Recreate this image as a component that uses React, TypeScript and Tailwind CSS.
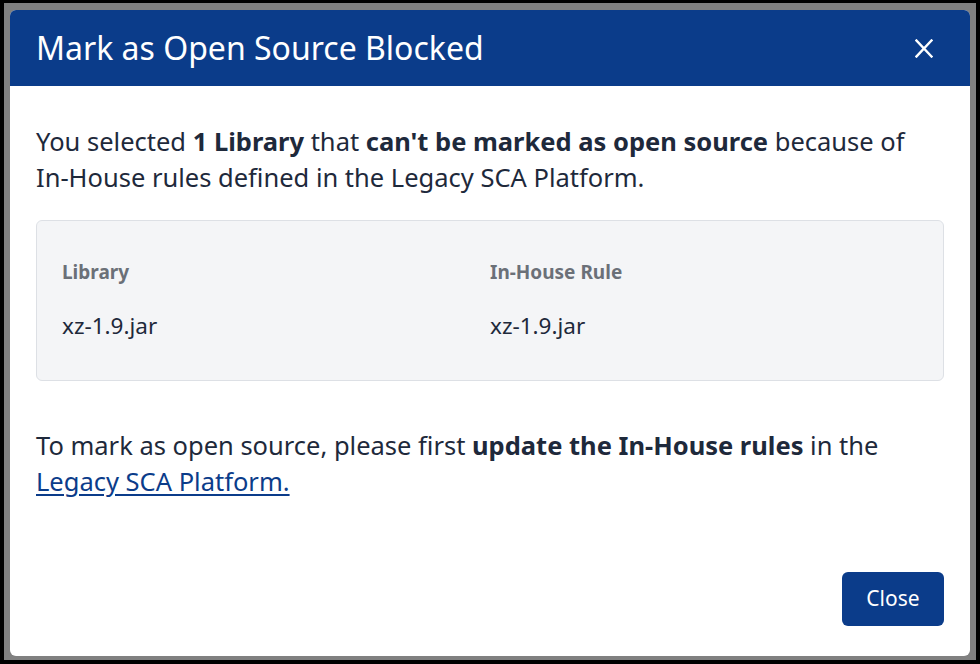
import React from "react";

export default function App() {
  return (
    <div className="w-[980px] h-[664px] bg-black pt-[3px] pl-[4px] pr-[4px] pb-[4px]" style={{ fontFamily: '"Noto Sans", "Open Sans", sans-serif' }}>
      <div className="w-full h-full bg-[#808080] pt-[7px] pl-[6px] pr-[6px] pb-[4px]">
        <div className="w-full h-full bg-white rounded-[6px] overflow-hidden flex flex-col">
          <div className="h-[76px] bg-[#0b3c8a] flex items-center justify-between pl-[26px] pr-[37px] shrink-0">
            <h1 className="text-white text-[32px] leading-none font-normal">Mark as Open Source Blocked</h1>
            <svg width="18" height="19" viewBox="0 0 18 19" className="text-white">
              <path d="M1.5 1.5 L16.5 17.5 M16.5 1.5 L1.5 17.5" stroke="currentColor" strokeWidth="2.4" strokeLinecap="square" fill="none" />
            </svg>
          </div>
          <div className="flex-1 flex flex-col px-[26px] pt-[37px] pb-[30px] text-[#1e293b]">
            <p className="text-[25.5px] leading-[36px]">
              You selected <b className="font-bold">1 Library</b> that <b className="font-bold">can't be marked as open source</b> because of <span className="whitespace-nowrap">In-House</span> rules defined in the Legacy SCA Platform.
            </p>
            <div className="mt-[25px] h-[161px] bg-[#f4f5f7] border border-[#dde0e5] rounded-[6px] px-[25px] pt-[39px] grid grid-cols-2">
              <div>
                <div className="text-[19px] leading-[24px] font-bold text-[#6b7078]">Library</div>
                <div className="mt-[30px] text-[22.5px] leading-[24px] text-[#1e293b]">xz-1.9.jar</div>
              </div>
              <div>
                <div className="text-[19px] leading-[24px] font-bold text-[#6b7078]">In-House Rule</div>
                <div className="mt-[30px] text-[22.5px] leading-[24px] text-[#1e293b]">xz-1.9.jar</div>
              </div>
            </div>
            <p className="mt-[46px] text-[25.5px] leading-[36px]">
              To mark as open source, please first <b className="font-bold">update the <span className="whitespace-nowrap">In-House</span> rules</b> in the{" "}
              <a href="#" className="text-[#0b3c8a] underline underline-offset-[3px]">Legacy SCA Platform.</a>
            </p>
            <div className="mt-auto flex justify-end">
              <button className="w-[102px] h-[54px] bg-[#0b3c8a] text-white text-[21px] rounded-[6px]">Close</button>
            </div>
          </div>
        </div>
      </div>
    </div>
  );
}
